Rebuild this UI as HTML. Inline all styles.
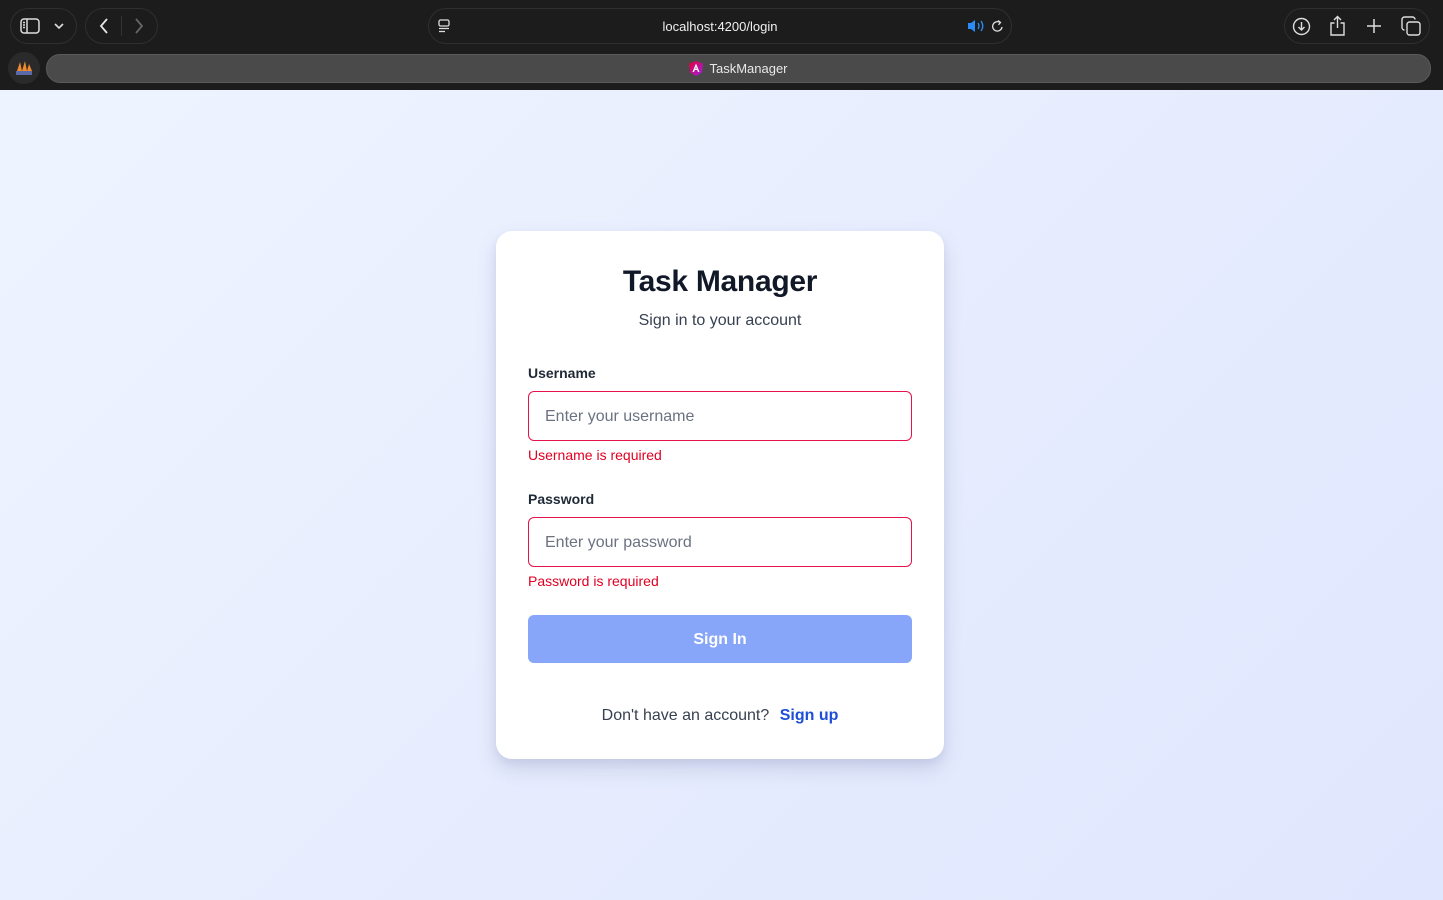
<!DOCTYPE html>
<html><head><meta charset="utf-8"><style>
*{box-sizing:border-box;margin:0;padding:0}
body{width:1443px;height:900px;overflow:hidden;font-family:"Liberation Sans",Helvetica,Arial,sans-serif;background:#1c1c1e}
.bar{position:absolute;left:0;top:0;width:1443px;height:90px;background:#1c1c1c}
.pill{position:absolute;border:1px solid #2f2f2f;border-radius:18px;height:36px;top:8px}
.tab{position:absolute;left:46px;top:54px;width:1385px;height:29px;border-radius:14px;background:#4a4a4a;border:1px solid #5a5a5a;color:#e8e8e8;font-size:13px;text-align:center;line-height:27px}
.page{position:absolute;left:0;top:90px;width:1443px;height:810px;background:linear-gradient(135deg,#eef4ff 0%,#e0e6fd 100%)}
.card{position:absolute;left:496px;top:141px;width:448px;height:528px;background:#fff;border-radius:16px;box-shadow:0 10px 20px rgba(80,90,140,.18),0 4px 8px rgba(80,90,140,.08)}
h1{position:absolute;top:34px;width:100%;text-align:center;font-size:30px;font-weight:bold;color:#111827;letter-spacing:-0.3px}
.sub{position:absolute;top:81px;width:100%;text-align:center;font-size:16px;color:#374151}
.lbl{position:absolute;left:32px;font-size:14px;font-weight:bold;color:#1f2937}
.inp{position:absolute;left:32px;width:384px;height:50px;border:1px solid #e5134a;border-radius:6px;padding-left:16px;padding-top:2px;line-height:46px;font-size:16px;color:#6b7280}
.err{position:absolute;left:32px;font-size:14px;color:#e00022}
.btn{position:absolute;left:32px;top:384px;width:384px;height:48px;border-radius:6px;background:#87a5f9;color:#fff;font-weight:bold;font-size:16px;text-align:center;line-height:50px}
.foot{position:absolute;top:476px;width:100%;text-align:center;font-size:16px;color:#374151}
.foot b{color:#1d4ed8;margin-left:6px}
</style></head><body>
<div class="bar">
 <div class="pill" style="left:10px;width:67px"></div>
 <svg style="position:absolute;left:20px;top:18px" width="20" height="16" viewBox="0 0 20 16" fill="none" stroke="#ddd" stroke-width="1.5"><rect x="1" y="1" width="18" height="14" rx="3"/><line x1="7" y1="1" x2="7" y2="15"/><line x1="3" y1="4.5" x2="5" y2="4.5"/><line x1="3" y1="7" x2="5" y2="7"/><line x1="3" y1="9.5" x2="5" y2="9.5"/></svg>
 <svg style="position:absolute;left:53px;top:22px" width="12" height="8" viewBox="0 0 12 8" fill="none" stroke="#ddd" stroke-width="1.6"><path d="M2 2l4 4 4-4"/></svg>
 <div class="pill" style="left:85px;width:73px"></div>
 <div style="position:absolute;left:121px;top:16px;width:1px;height:20px;background:#333"></div>
 <svg style="position:absolute;left:98px;top:17px" width="12" height="18" viewBox="0 0 12 18" fill="none" stroke="#e5e5e5" stroke-width="1.8"><path d="M9 2L3 9l6 7"/></svg>
 <svg style="position:absolute;left:133px;top:17px" width="12" height="18" viewBox="0 0 12 18" fill="none" stroke="#666" stroke-width="1.8"><path d="M3 2l6 7-6 7"/></svg>
 <div class="pill" style="left:428px;width:584px"></div>
 <svg style="position:absolute;left:437px;top:19px" width="14" height="14" viewBox="0 0 14 14" fill="none" stroke="#ddd" stroke-width="1.3"><rect x="2" y="1" width="10" height="6" rx="1.5"/><line x1="2" y1="9.5" x2="12" y2="9.5"/><line x1="2" y1="12.5" x2="8" y2="12.5"/></svg>
 <div style="position:absolute;left:620px;top:19px;width:200px;text-align:center;color:#f0f0f0;font-size:13px">localhost:4200/login</div>
 <svg style="position:absolute;left:967px;top:19px" width="18" height="14" viewBox="0 0 18 14"><path d="M1 4h3l4-3v12l-4-3H1z" fill="#2b8cf5"/><path d="M11 4q2 3 0 6M14 2q3.5 5 0 10" stroke="#2b8cf5" stroke-width="1.3" fill="none"/></svg>
 <svg style="position:absolute;left:990px;top:19px" width="15" height="15" viewBox="0 0 15 15" fill="none" stroke="#ddd" stroke-width="1.3"><path d="M12 8a4.7 4.7 0 1 1-2-4.5"/><path d="M8 1.5l2.5 2-2 2.3"/></svg>
 <div class="pill" style="left:1284px;width:146px"></div>
 <svg style="position:absolute;left:1292px;top:17px" width="19" height="19" viewBox="0 0 19 19" fill="none" stroke="#ddd" stroke-width="1.4"><circle cx="9.5" cy="9.5" r="8"/><path d="M9.5 5v8M6.5 10l3 3 3-3"/></svg>
 <svg style="position:absolute;left:1329px;top:15px" width="17" height="21" viewBox="0 0 17 21" fill="none" stroke="#ddd" stroke-width="1.4"><path d="M5.5 8H2v12h13V8h-3.5M8.5 13V1.5M5 5l3.5-3.5L12 5"/></svg>
 <svg style="position:absolute;left:1366px;top:18px" width="16" height="16" viewBox="0 0 16 16" stroke="#ddd" stroke-width="1.5"><path d="M8 1v14M1 8h14"/></svg>
 <svg style="position:absolute;left:1401px;top:16px" width="20" height="20" viewBox="0 0 20 20" fill="none" stroke="#ddd" stroke-width="1.4"><rect x="6" y="6" width="13" height="13" rx="2.5"/><path d="M14 3.5A2.5 2.5 0 0 0 11.5 1h-8A2.5 2.5 0 0 0 1 3.5v8A2.5 2.5 0 0 0 3.5 14"/></svg>
 <div style="position:absolute;left:8px;top:52px;width:32px;height:32px;border-radius:16px;background:#2a2a2a"></div>
 <svg style="position:absolute;left:15px;top:59px" width="18" height="17" viewBox="0 0 18 17"><path d="M2 12L5 3l2 9zM7 12l3-10 2 10zM12 12l2-7 3 7z" fill="#f08a2c"/><rect x="1" y="12" width="16" height="4" fill="#5a6aa8"/></svg>
 <div class="tab"><svg style="vertical-align:-3px;margin-right:6px" width="14" height="15" viewBox="0 0 14 15"><defs><linearGradient id="g" x1="0" y1="0" x2="1" y2="1"><stop offset="0" stop-color="#e40035"/><stop offset="1" stop-color="#9e1ee8"/></linearGradient></defs><path d="M7 0L0 2.5l1 9L7 15l6-3.5 1-9z" fill="url(#g)"/><path d="M7 2.5L3.5 11h1.5l.8-2h2.4l.8 2h1.5zM6.3 7.7L7 5.8l.7 1.9z" fill="#fff"/></svg>TaskManager</div>
</div>
<div class="page">
 <div class="card">
  <h1>Task Manager</h1>
  <div class="sub">Sign in to your account</div>
  <div class="lbl" style="top:134px">Username</div>
  <div class="inp" style="top:160px">Enter your username</div>
  <div class="err" style="top:216px">Username is required</div>
  <div class="lbl" style="top:260px">Password</div>
  <div class="inp" style="top:286px">Enter your password</div>
  <div class="err" style="top:342px">Password is required</div>
  <div class="btn">Sign In</div>
  <div class="foot">Don't have an account? <b>Sign up</b></div>
 </div>
</div>
</body></html>
